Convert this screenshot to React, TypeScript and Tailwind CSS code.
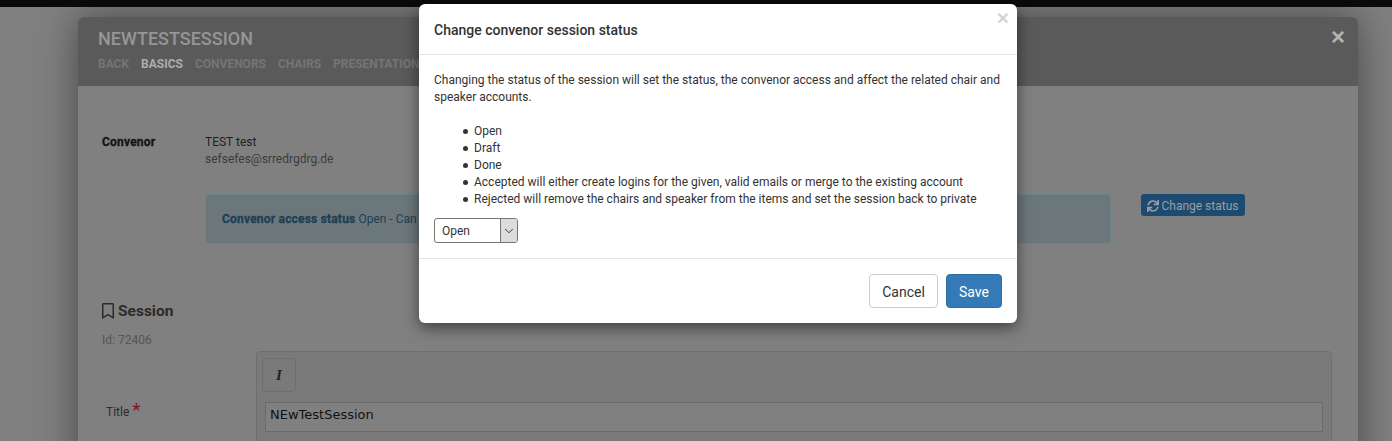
import { FaSync, FaRegBookmark } from "react-icons/fa";
import { ChevronDown } from "lucide-react";

const NAV_ITEMS = ["Back", "Basics", "Convenors", "Chairs", "Presentations"];

const STATUS_ITEMS = [
  "Open",
  "Draft",
  "Done",
  "Accepted will either create logins for the given, valid emails or merge to the existing account",
  "Rejected will remove the chairs and speaker from the items and set the session back to private",
];

function StatusModal() {
  return (
    <div className="absolute left-[419px] top-[4px] z-10 h-[319px] w-[598px] rounded-[6px] bg-white text-[#333] shadow-[0_5px_15px_rgba(0,0,0,0.5)]">
      <div className="relative h-[51px] border-b border-[#e5e5e5] px-[15px] pt-[16px]">
        <h4 className="text-[14px] leading-[20px] font-medium">Change convenor session status</h4>
        <span className="absolute right-[8px] top-[3px] font-['Liberation_Sans',sans-serif] text-[21px] leading-[21px] font-bold text-[#d4d4d4]">
          ×
        </span>
      </div>
      <div className="h-[204px] border-b border-[#e5e5e5] px-[15px] pt-[17px] text-[12px] leading-[17px]">
        <p>
          Changing the status of the session will set the status, the convenor access and affect the related chair and speaker
          accounts.
        </p>
        <ul className="mt-[17px] pl-[29px]">
          {STATUS_ITEMS.map((item) => (
            <li key={item} className="flex items-center">
              <span className="mr-[6px] h-[5px] w-[5px] rounded-full bg-[#333]" />
              {item}
            </li>
          ))}
        </ul>
        <div className="mt-[10px] flex h-[25px] w-[84px] overflow-hidden rounded-[3px] border border-[#767676] bg-white">
          <span className="flex-1 pl-[7px] leading-[24px]">Open</span>
          <span className="flex w-[17px] items-center justify-center border-l border-[#767676] bg-[#dcdcdc]">
            <ChevronDown size={14} strokeWidth={1.5} className="text-[#222]" />
          </span>
        </div>
      </div>
      <div className="flex justify-end gap-[8px] px-[15px] pt-[15px]">
        <button className="h-[34px] w-[69px] rounded-[4px] border border-[#ccc] bg-white pt-[2px] text-[14px] text-[#333]">Cancel</button>
        <button className="h-[34px] w-[56px] rounded-[4px] border border-[#2e6da4] bg-[#337ab7] pt-[2px] text-[14px] text-white">Save</button>
      </div>
    </div>
  );
}

export default function App() {
  return (
    <div className="relative h-[441px] w-[1392px] overflow-hidden bg-[#808080] font-['Roboto',sans-serif] text-[12px]">
      <div className="relative z-[1] h-[7px] bg-[#0a0a0a]" />
      <div className="ml-[78px] mt-[10px] h-[500px] w-[1280px] rounded-t-[6px] bg-[#808080] shadow-[0_0_40px_rgba(0,0,0,0.45)]">
        <div className="relative h-[69px] rounded-t-[6px] bg-[#5a5a5a] pl-[20px] pt-[10px]">
          <h1 className="text-[18px] leading-[24px] font-medium text-[#969696] uppercase">NEwTestSession</h1>
          <nav className="mt-[5px] flex gap-[12px] text-[12px] leading-[16px] font-bold uppercase text-[#757575]">
            {NAV_ITEMS.map((item) => (
              <span key={item} className={item === "Basics" ? "text-[#adadad]" : ""}>
                {item}
              </span>
            ))}
          </nav>
          <span className="absolute right-[13px] top-[8px] font-['Liberation_Sans',sans-serif] text-[24px] leading-[24px] font-bold text-[#b4b4b4]">
            ×
          </span>
        </div>

        <div className="pl-[24px] pt-[48px] pr-[26px]">
          <div className="flex leading-[17px]">
            <div className="w-[103px] font-bold tracking-[0.2px] text-[#141414] [-webkit-text-stroke:0.3px_#141414]">Convenor</div>
            <div>
              <div className="text-[#1f1f1f]">TEST test</div>
              <div className="text-[#3c3c3c]">sefsefes@srredrgdrg.de</div>
            </div>
          </div>

          <div className="mt-[26px] flex items-start pl-[103px]">
            <div className="h-[50px] w-[906px] rounded-[4px] border border-[#66858f] bg-[#6c777c] pl-[16px] pt-[16px] leading-[17px] text-[#1c3f52]">
              <b className="tracking-[0.2px] [-webkit-text-stroke:0.3px_#1c3f52]">Convenor access status</b> Open - Can
            </div>
            <button className="ml-[30px] flex h-[22px] w-[104px] items-center justify-center gap-[2px] rounded-[3px] bg-[#1d4a70] pt-[1px] text-[12px] text-[#9a9fa3]">
              <FaSync size={12} />
              Change status
            </button>
          </div>

          <h3 className="mt-[57px] -ml-[2px] flex items-center gap-[2px] text-[15.5px] leading-[20px] font-bold text-[#2b2b2b]">
            <FaRegBookmark size={16} className="text-[#2b2b2b]" />
            Session
          </h3>
          <div className="mt-[11px] leading-[17px] text-[#555]">Id: 72406</div>

          <div className="mt-[2px] flex">
            <div className="w-[154px] pl-[4px] pt-[53px] leading-[17px] text-[#2b2b2b]">
              Title <span className="text-[19px] leading-[12px] text-[#8a0f1f]">*</span>
            </div>
            <div className="h-[100px] w-[1076px] rounded-[4px] border border-[#6e6e6e] bg-[#7a7a7a] px-[8px] pt-[6px]">
              <div className="-ml-[3px] flex h-[34px] w-[34px] items-center justify-center rounded-[4px] border border-[#6e6e6e] font-['Liberation_Serif',serif] text-[15px] font-bold text-[#222] italic">
                I
              </div>
              <div className="mt-[10px] h-[30px] w-[1058px] border border-[#6a6a6a] bg-[#808080] pl-[4px] font-['DejaVu_Sans',sans-serif] text-[13px] leading-[24px] text-[#111]">
                NEwTestSession
              </div>
            </div>
          </div>
        </div>
      </div>
      <StatusModal />
    </div>
  );
}
